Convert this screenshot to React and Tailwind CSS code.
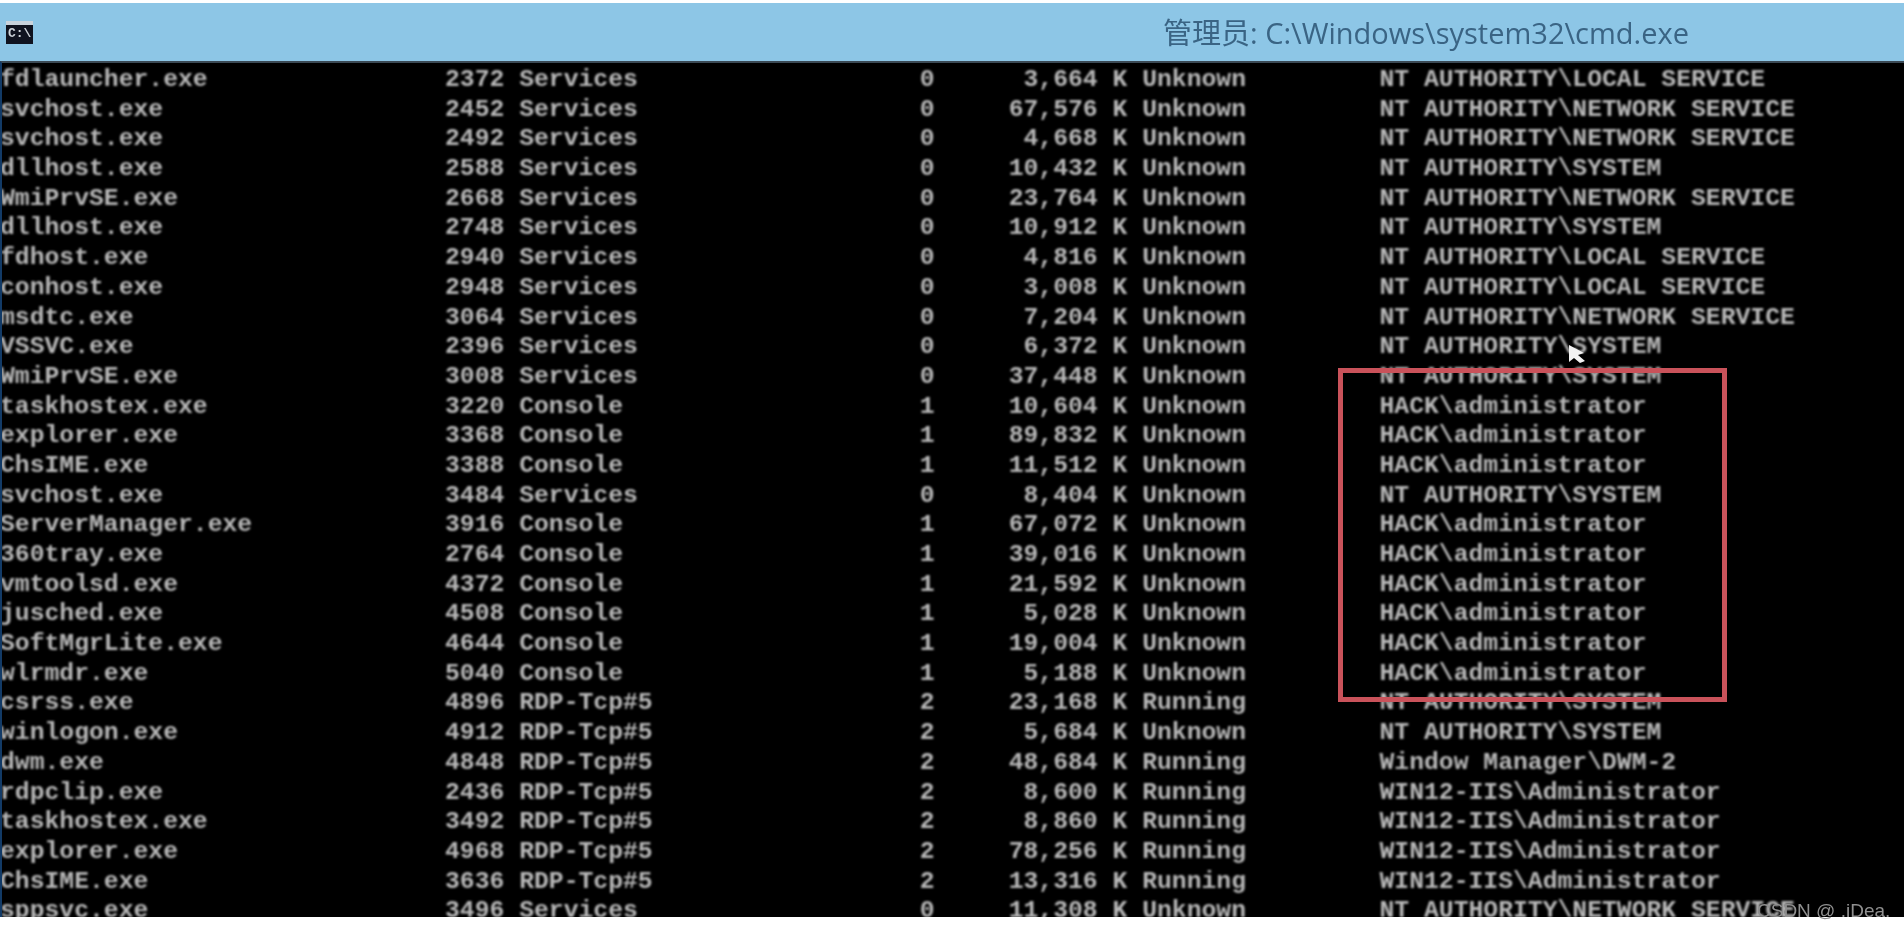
const rows = [
	["fdlauncher.exe", "2372", "Services", "0", "3,664", "Unknown", "NT AUTHORITY\\LOCAL SERVICE"],
	["svchost.exe", "2452", "Services", "0", "67,576", "Unknown", "NT AUTHORITY\\NETWORK SERVICE"],
	["svchost.exe", "2492", "Services", "0", "4,668", "Unknown", "NT AUTHORITY\\NETWORK SERVICE"],
	["dllhost.exe", "2588", "Services", "0", "10,432", "Unknown", "NT AUTHORITY\\SYSTEM"],
	["WmiPrvSE.exe", "2668", "Services", "0", "23,764", "Unknown", "NT AUTHORITY\\NETWORK SERVICE"],
	["dllhost.exe", "2748", "Services", "0", "10,912", "Unknown", "NT AUTHORITY\\SYSTEM"],
	["fdhost.exe", "2940", "Services", "0", "4,816", "Unknown", "NT AUTHORITY\\LOCAL SERVICE"],
	["conhost.exe", "2948", "Services", "0", "3,008", "Unknown", "NT AUTHORITY\\LOCAL SERVICE"],
	["msdtc.exe", "3064", "Services", "0", "7,204", "Unknown", "NT AUTHORITY\\NETWORK SERVICE"],
	["VSSVC.exe", "2396", "Services", "0", "6,372", "Unknown", "NT AUTHORITY\\SYSTEM"],
	["WmiPrvSE.exe", "3008", "Services", "0", "37,448", "Unknown", "NT AUTHORITY\\SYSTEM"],
	["taskhostex.exe", "3220", "Console", "1", "10,604", "Unknown", "HACK\\administrator"],
	["explorer.exe", "3368", "Console", "1", "89,832", "Unknown", "HACK\\administrator"],
	["ChsIME.exe", "3388", "Console", "1", "11,512", "Unknown", "HACK\\administrator"],
	["svchost.exe", "3484", "Services", "0", "8,404", "Unknown", "NT AUTHORITY\\SYSTEM"],
	["ServerManager.exe", "3916", "Console", "1", "67,072", "Unknown", "HACK\\administrator"],
	["360tray.exe", "2764", "Console", "1", "39,016", "Unknown", "HACK\\administrator"],
	["vmtoolsd.exe", "4372", "Console", "1", "21,592", "Unknown", "HACK\\administrator"],
	["jusched.exe", "4508", "Console", "1", "5,028", "Unknown", "HACK\\administrator"],
	["SoftMgrLite.exe", "4644", "Console", "1", "19,004", "Unknown", "HACK\\administrator"],
	["wlrmdr.exe", "5040", "Console", "1", "5,188", "Unknown", "HACK\\administrator"],
	["csrss.exe", "4896", "RDP-Tcp#5", "2", "23,168", "Running", "NT AUTHORITY\\SYSTEM"],
	["winlogon.exe", "4912", "RDP-Tcp#5", "2", "5,684", "Unknown", "NT AUTHORITY\\SYSTEM"],
	["dwm.exe", "4848", "RDP-Tcp#5", "2", "48,684", "Running", "Window Manager\\DWM-2"],
	["rdpclip.exe", "2436", "RDP-Tcp#5", "2", "8,600", "Running", "WIN12-IIS\\Administrator"],
	["taskhostex.exe", "3492", "RDP-Tcp#5", "2", "8,860", "Running", "WIN12-IIS\\Administrator"],
	["explorer.exe", "4968", "RDP-Tcp#5", "2", "78,256", "Running", "WIN12-IIS\\Administrator"],
	["ChsIME.exe", "3636", "RDP-Tcp#5", "2", "13,316", "Running", "WIN12-IIS\\Administrator"],
	["sppsvc.exe", "3496", "Services", "0", "11,308", "Unknown", "NT AUTHORITY\\NETWORK SERVICE"],
];

// same column widths tasklist /v prints
const line = (r) =>
	r[0].padEnd(26) +
	r[1].padStart(8) +
	" " +
	r[2].padEnd(16) +
	" " +
	r[3].padStart(11) +
	" " +
	(r[4] + " K").padStart(12) +
	" " +
	r[5].padEnd(15) +
	" " +
	r[6];

const CmdIcon = () => (
	<div className="w-[27px] h-[23px] flex flex-col bg-[#10131f] border-t-[4px] border-[#c9d3dc] blur-[0.6px]">
		<span className="pl-[2px] text-[13px] leading-[18px] font-bold text-[#cfd4da] font-['Liberation_Mono',monospace]">C:\</span>
	</div>
);

const App = () => {
	return (
		<div className="relative w-[1904px] h-[926px] bg-white overflow-hidden flex flex-col pt-[3px] pb-[9px]">
			<div className="h-[58px] shrink-0 flex items-center bg-[#8dc6e6] pl-[6px]">
				<CmdIcon />
				<span className="ml-[1130px] text-[29px] leading-none text-[#3a6484] font-['Open_Sans','Noto_Sans_CJK_SC',sans-serif] blur-[0.6px]">
					管理员: C:\Windows\system32\cmd.exe
				</span>
			</div>
			<div className="flex-1 min-h-0 overflow-hidden bg-black border-t-[2px] border-l-[2px] border-t-[#3c4a55] border-l-[#123a66] pt-[2px]">
				<div className="font-['Liberation_Mono',monospace] font-bold text-[24.72px] leading-[29.68px] text-[#b8b8b8] whitespace-pre blur-[0.8px] -ml-[2px]">
					{rows.map((r) => (
						<div key={r[0] + r[1]}>{line(r)}</div>
					))}
				</div>
			</div>

			{/* annotation box drawn over the console */}
			<div className="absolute left-[1338px] top-[368px] w-[389px] h-[334px] border-[5px] border-[#c9525a]" />

			{/* mouse pointer */}
			<svg className="absolute left-[1568px] top-[344px]" width="20" height="24" viewBox="0 0 20 24">
				<path d="M1 1 L1 18 L6 14 L12 19 L17 17 L10 11 L16 9 Z" fill="#f2f2f2" />
			</svg>

			<span className="absolute left-[1757px] top-[900px] text-[19px] leading-[22px] text-[#8f8f8f] font-['Liberation_Sans',sans-serif] blur-[0.5px]">
				CSDN @ .iDea.
			</span>
		</div>
	);
};

export default App;
